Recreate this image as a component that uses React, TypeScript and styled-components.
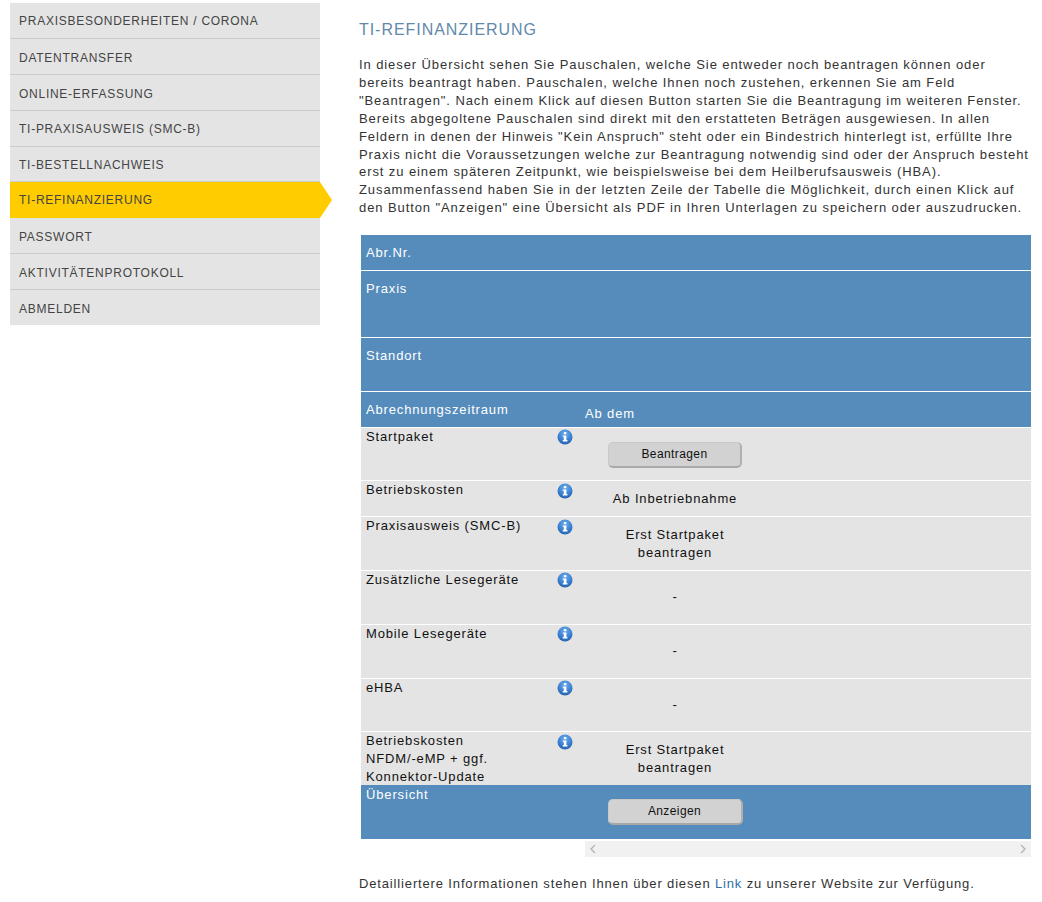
import styled, { createGlobalStyle } from "styled-components";

const GlobalStyle = createGlobalStyle`
	html, body {
		margin: 0;
		padding: 0;
		background: #ffffff;
	}
	body {
		font-family: "Liberation Sans", Arial, sans-serif;
		font-size: 13px;
		color: #333333;
	}
`;

const Page = styled.div`
	display: flex;
	align-items: flex-start;
	width: 1042px;
	height: 902px;
	overflow: hidden;
	box-sizing: border-box;
	padding: 3px 11px 0 10px;
`;

const Sidebar = styled.nav`
	flex: 0 0 310px;
	display: flex;
	flex-direction: column;
`;

const NavItem = styled.a<{ $active?: boolean; $h: number; $pt: number }>`
	position: relative;
	display: flex;
	align-items: center;
	box-sizing: border-box;
	height: ${(p) => p.$h}px;
	padding: ${(p) => p.$pt}px 0 0 9px;
	font-size: 12px;
	letter-spacing: 0.74px;
	color: #444444;
	background: ${(p) => (p.$active ? "#ffcc00" : "#e4e4e4")};
	border-bottom: 1px solid ${(p) => (p.$active ? "#ffcc00" : "#cccccc")};
	&:last-child {
		border-bottom: 0;
	}
	${(p) =>
		p.$active
			? `&::after {
		content: "";
		position: absolute;
		left: 100%;
		top: 0;
		border-style: solid;
		border-width: 18px 0 18px 12px;
		border-color: transparent transparent transparent #ffcc00;
	}`
			: ""}
`;

const Main = styled.main`
	flex: 1;
	margin-left: 39px;
	min-width: 0;
`;

const Heading = styled.h1`
	margin: 18px 0 0;
	font-size: 16px;
	line-height: 18px;
	font-weight: 400;
	letter-spacing: 0.95px;
	color: #6289a9;
`;

const Intro = styled.p`
	margin: 17px 0 0;
	font-size: 13px;
	line-height: 17.9px;
	letter-spacing: 0.91px;
	color: #333333;
	white-space: nowrap;
`;

const Table = styled.div`
	margin: 18px 0 0 2px;
	width: 670px;
	display: flex;
	flex-direction: column;
	gap: 1px;
`;

const Row = styled.div<{ $h: number; $blue?: boolean; $flush?: boolean }>`
	display: flex;
	height: ${(p) => p.$h}px;
	box-sizing: border-box;
	margin-top: ${(p) => (p.$flush ? -1 : 0)}px;
	background: ${(p) => (p.$blue ? "#568cbc" : "#e4e4e4")};
	color: ${(p) => (p.$blue ? "#ffffff" : "#111111")};
	font-size: 13px;
	line-height: 18px;
	letter-spacing: 0.85px;
`;

const LabelCell = styled.div<{ $pt?: number }>`
	position: relative;
	flex: 0 0 224px;
	box-sizing: border-box;
	padding: ${(p) => p.$pt ?? 0}px 0 0 5px;
	white-space: nowrap;
`;

const ValueCell = styled.div<{ $pt?: number }>`
	flex: 0 0 180px;
	box-sizing: border-box;
	padding-top: ${(p) => p.$pt ?? 0}px;
	text-align: center;
	white-space: nowrap;
`;

const HeaderValue = styled.div`
	padding: 13px 0 0;
`;

const InfoSlot = styled.span<{ $top?: number }>`
	position: absolute;
	left: 196px;
	top: ${(p) => p.$top ?? 2}px;
	width: 16px;
	height: 16px;
`;

const ActionButton = styled.button<{ $w: number; $mt: number }>`
	display: block;
	width: ${(p) => p.$w}px;
	height: 26px;
	margin: ${(p) => p.$mt}px auto 0;
	padding: 0 0 1px;
	font-family: "Liberation Sans", Arial, sans-serif;
	font-size: 12px;
	letter-spacing: 0.4px;
	color: #111111;
	background: #d2d2d2;
	border: 1px solid #c8c8c8;
	border-bottom: 2px solid #a8a8a8;
	border-right: 2px solid #b0b0b0;
	border-radius: 5px;
`;

const ScrollTrack = styled.div`
	display: flex;
	align-items: center;
	justify-content: space-between;
	box-sizing: border-box;
	width: 446px;
	height: 16px;
	margin: 2px 0 0 226px;
	padding: 0 4px;
	background: #f1f1f1;
`;

const Footnote = styled.p`
	margin: 18px 0 0;
	font-size: 13px;
	line-height: 18px;
	letter-spacing: 0.85px;
	color: #333333;
	white-space: nowrap;
`;

const FootLink = styled.a`
	color: #2f6fa8;
`;

const InfoIcon = () => (
	<svg width="16" height="16" viewBox="0 0 16 16">
		<defs>
			<radialGradient id="infoFill" cx="50%" cy="30%" r="75%">
				<stop offset="0%" stopColor="#6fb0ee" />
				<stop offset="60%" stopColor="#3a7fd0" />
				<stop offset="100%" stopColor="#1f5da8" />
			</radialGradient>
		</defs>
		<circle cx="8" cy="8" r="7.5" fill="url(#infoFill)" />
		<rect x="6.8" y="3" width="2.6" height="2.3" rx="0.8" fill="#ffffff" />
		<path d="M5.8 6.5h3.6v4.6h1v1.3H5.8v-1.3h1V7.8h-1z" fill="#ffffff" />
	</svg>
);

const Chevron = ({ d }: { d: string }) => (
	<svg width="8" height="10" viewBox="0 0 8 10">
		<path d={d} fill="none" stroke="#b4b4b4" strokeWidth="1.4" />
	</svg>
);

const navItems = [
	{ label: "PRAXISBESONDERHEITEN / CORONA", h: 36, pt: 0 },
	{ label: "DATENTRANSFER", h: 36, pt: 2 },
	{ label: "ONLINE-ERFASSUNG", h: 36, pt: 2 },
	{ label: "TI-PRAXISAUSWEIS (SMC-B)", h: 36, pt: 0 },
	{ label: "TI-BESTELLNACHWEIS", h: 35, pt: 2 },
	{ label: "TI-REFINANZIERUNG", h: 36, pt: 0, active: true },
	{ label: "PASSWORT", h: 36, pt: 2 },
	{ label: "AKTIVITÄTENPROTOKOLL", h: 36, pt: 2 },
	{ label: "ABMELDEN", h: 35, pt: 2 },
];

export default function App() {
	return (
		<>
			<GlobalStyle />
			<Page>
				<Sidebar>
					{navItems.map((item) => (
						<NavItem key={item.label} $active={item.active} $h={item.h} $pt={item.pt}>
							{item.label}
						</NavItem>
					))}
				</Sidebar>
				<Main>
					<Heading>TI-REFINANZIERUNG</Heading>
					<Intro>
						In dieser Übersicht sehen Sie Pauschalen, welche Sie entweder noch beantragen können oder
						<br />
						bereits beantragt haben. Pauschalen, welche Ihnen noch zustehen, erkennen Sie am Feld
						<br />
						"Beantragen". Nach einem Klick auf diesen Button starten Sie die Beantragung im weiteren Fenster.
						<br />
						Bereits abgegoltene Pauschalen sind direkt mit den erstatteten Beträgen ausgewiesen. In allen
						<br />
						Feldern in denen der Hinweis "Kein Anspruch" steht oder ein Bindestrich hinterlegt ist, erfüllte Ihre
						<br />
						Praxis nicht die Voraussetzungen welche zur Beantragung notwendig sind oder der Anspruch besteht
						<br />
						erst zu einem späteren Zeitpunkt, wie beispielsweise bei dem Heilberufsausweis (HBA).
						<br />
						Zusammenfassend haben Sie in der letzten Zeile der Tabelle die Möglichkeit, durch einen Klick auf
						<br />
						den Button "Anzeigen" eine Übersicht als PDF in Ihren Unterlagen zu speichern oder auszudrucken.
					</Intro>
					<Table>
						<Row $h={35} $blue>
							<LabelCell $pt={9}>Abr.Nr.</LabelCell>
						</Row>
						<Row $h={66} $blue>
							<LabelCell $pt={9}>Praxis</LabelCell>
						</Row>
						<Row $h={53} $blue>
							<LabelCell $pt={9}>Standort</LabelCell>
						</Row>
						<Row $h={35} $blue>
							<LabelCell $pt={9}>Abrechnungszeitraum</LabelCell>
							<HeaderValue>Ab dem</HeaderValue>
						</Row>
						<Row $h={52}>
							<LabelCell>
								Startpaket
								<InfoSlot $top={1}>
									<InfoIcon />
								</InfoSlot>
							</LabelCell>
							<ValueCell>
								<ActionButton $w={134} $mt={14}>
									Beantragen
								</ActionButton>
							</ValueCell>
						</Row>
						<Row $h={35}>
							<LabelCell>
								Betriebskosten
								<InfoSlot>
									<InfoIcon />
								</InfoSlot>
							</LabelCell>
							<ValueCell $pt={9}>Ab Inbetriebnahme</ValueCell>
						</Row>
						<Row $h={53}>
							<LabelCell>
								Praxisausweis (SMC-B)
								<InfoSlot>
									<InfoIcon />
								</InfoSlot>
							</LabelCell>
							<ValueCell $pt={9}>
								Erst Startpaket
								<br />
								beantragen
							</ValueCell>
						</Row>
						<Row $h={53}>
							<LabelCell>
								Zusätzliche Lesegeräte
								<InfoSlot $top={1}>
									<InfoIcon />
								</InfoSlot>
							</LabelCell>
							<ValueCell $pt={17}>-</ValueCell>
						</Row>
						<Row $h={53}>
							<LabelCell>
								Mobile Lesegeräte
								<InfoSlot $top={1}>
									<InfoIcon />
								</InfoSlot>
							</LabelCell>
							<ValueCell $pt={17}>-</ValueCell>
						</Row>
						<Row $h={52}>
							<LabelCell>
								eHBA
								<InfoSlot $top={1}>
									<InfoIcon />
								</InfoSlot>
							</LabelCell>
							<ValueCell $pt={17}>-</ValueCell>
						</Row>
						<Row $h={53}>
							<LabelCell>
								Betriebskosten
								<br />
								NFDM/-eMP + ggf.
								<br />
								Konnektor-Update
								<InfoSlot>
									<InfoIcon />
								</InfoSlot>
							</LabelCell>
							<ValueCell $pt={9}>
								Erst Startpaket
								<br />
								beantragen
							</ValueCell>
						</Row>
						<Row $h={54} $blue $flush>
							<LabelCell $pt={1}>Übersicht</LabelCell>
							<ValueCell>
								<ActionButton $w={135} $mt={14}>
									Anzeigen
								</ActionButton>
							</ValueCell>
						</Row>
					</Table>
					<ScrollTrack>
						<Chevron d="M6 1L2 5l4 4" />
						<Chevron d="M2 1l4 4-4 4" />
					</ScrollTrack>
					<Footnote>
						Detailliertere Informationen stehen Ihnen über diesen <FootLink>Link</FootLink> zu unserer Website zur Verfügung.
					</Footnote>
				</Main>
			</Page>
		</>
	);
}
